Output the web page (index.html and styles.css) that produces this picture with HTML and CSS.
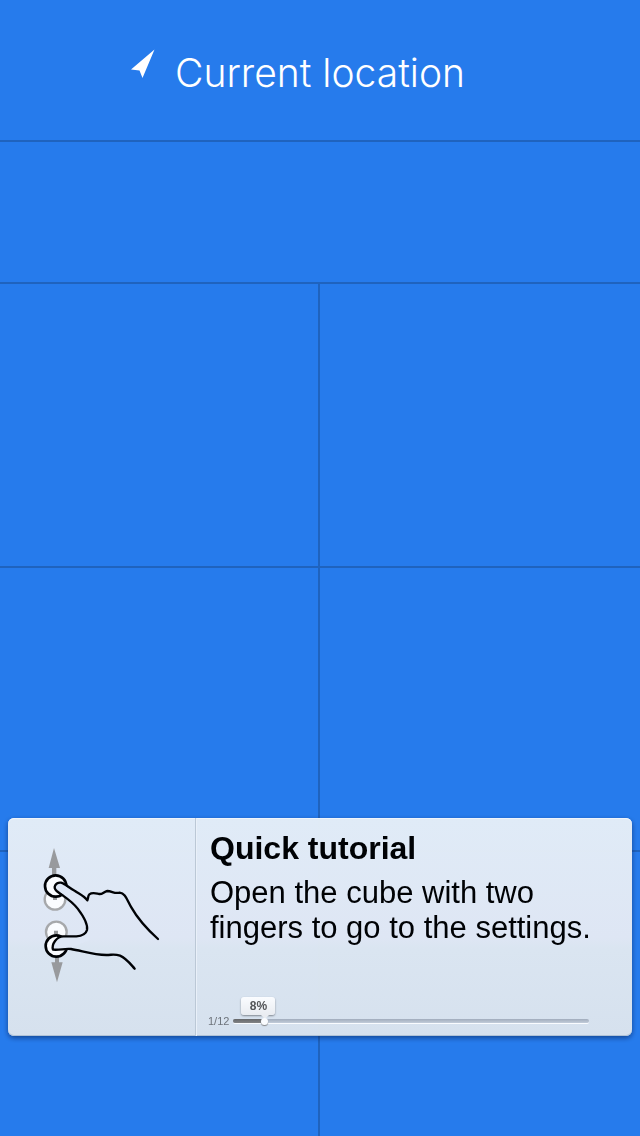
FILE: index.html
```
<!DOCTYPE html>
<html lang="en">
<head>
<meta charset="utf-8">
<meta name="viewport" content="width=device-width, initial-scale=1">
<title>Current location</title>
<link rel="stylesheet" href="styles.css">
</head>
<body>
<main class="board">
  <header class="location">
    <svg class="location-icon" viewBox="0 0 24 30" aria-hidden="true"><path d="M23.500 0.500L11.500 29L8.500 21.500L0 20.500Z"/></svg>
    <h1 class="location-title">Current location</h1>
  </header>
  <div class="row"></div>
  <div class="row row-tall"><div class="cell"></div></div>
  <div class="row row-tall"><div class="cell"></div></div>
  <div class="row row-rest"><div class="cell"></div></div>
</main>
<section class="tutorial" aria-labelledby="tutorial-title">
  <div class="gesture">
    <svg class="gesture-icon" viewBox="0 0 420 450" role="img" aria-label="Spread two fingers">
      <g class="arrows">
        <path d="M72 24L90 84H79V110H66V84H56Z"/>
        <path d="M81 427L64 367H75V340H87V367H98Z"/>
      </g>
      <g class="ghost">
        <circle cx="75" cy="178" r="31"/><circle cx="79" cy="276" r="31"/>
        <path d="M69 170h12v10h-12zM72 272h12v10h-12z"/>
      </g>
      <g class="touch"><circle cx="77" cy="138" r="32"/><circle cx="79" cy="318" r="32"/></g>
      <path class="hand-fill" d="M80 152C71 142 78 126 91 128L172 181L180 300L118 324L72 326C66 318 77 293 95 289L155 285C173 277 175 263 168 241C155 210 126 181 98 163Z"/>
      <path class="hand" d="M384 297C352 268 327 243 304 202C291 180 286 159 269 158C253 162 246 153 232 153C221 155 218 163 208 162C197 160 187 156 178 163C173 167 176 174 172 181C162 168 148 162 135 153C119 145 107 132 93 128C78 126 67 142 80 153C99 168 125 182 143 206C162 231 174 254 171 270C167 285 155 288 139 289L100 289C80 289 64 313 69 329C90 331 102 325 123 327C158 333 190 345 229 345C247 345 252 341 270 347C289 355 303 374 314 386"/>
    </svg>
  </div>
  <div class="content">
    <h2 class="tutorial-title" id="tutorial-title">Quick tutorial</h2>
    <p class="tutorial-text">Open the cube with two fingers to go to the settings.</p>
    <div class="steps">
      <label class="steps-label" for="steps-bar">1/12</label>
      <div class="track">
        <progress class="bar" id="steps-bar" max="12" value="1"></progress>
        <div class="marker"><span class="bubble">8%</span><span class="knob"></span></div>
      </div>
    </div>
  </div>
</section>
</body>
</html>
```
FILE: styles.css
```
* { box-sizing: border-box; }
body {
  margin: 0;
  background: #267bec;
  font-family: "Liberation Sans", Arial, sans-serif;
}
.board {
  display: flex;
  flex-direction: column;
  min-height: 100vh;
}
.location, .row {
  flex: none;
  height: 142px;
  border-bottom: 2px solid #1f63be;
}
.location {
  display: flex;
  align-items: center;
  justify-content: center;
  gap: 20px;
  padding: 6px 44px 0 0;
}
.location-icon {
  width: 24px;
  height: 30px;
  margin-bottom: 18px;
  fill: #fff;
}
.location-title {
  margin: 0;
  color: #fff;
  font: 300 39px/48px Inter, Roboto, sans-serif;
}
.row { display: flex; }
.row.row-tall { height: 284px; }
.row.row-rest {
  flex: 1 0 284px;
  height: auto;
  border-bottom: 0;
}
.cell {
  width: 50%;
  border-right: 2px solid #1f63be;
}
.tutorial {
  position: fixed;
  right: 8px;
  bottom: 100px;
  left: 8px;
  display: flex;
  min-height: 218px;
  border-radius: 6px;
  background: linear-gradient(#e5eef7, #e3e9f4 55%, #dfe8f1 60%, #dbe4ee);
  box-shadow: 0 2px 5px rgba(0, 20, 60, .5), inset 0 1px #f4f8fc, inset 0 -1px #b4c4d6;
  opacity: .98;
}
.gesture {
  flex: none;
  width: 188px;
  padding: 22px;
  border-right: 1px solid #bfcad6;
}
.gesture-icon {
  display: block;
  width: 140px;
  height: 150px;
}
.arrows { fill: #9c9c9c; }
.ghost circle { fill: #fff; stroke: #aaa; stroke-width: 7; }
.ghost path { fill: #999; }
.touch circle { fill: #fff; stroke: #000; stroke-width: 8; }
.hand-fill { fill: #e3eaf5; }
.hand { fill: none; stroke: #000; stroke-width: 7; stroke-linejoin: round; stroke-linecap: round; }
.content {
  flex: 1;
  display: flex;
  flex-direction: column;
  padding: 12px 36px 8px 13px;
  border-left: 1px solid #eef3f9;
}
.tutorial-title {
  margin: 0 0 8px;
  font-size: 32px;
  line-height: 37px;
}
.tutorial-text {
  margin: 0;
  font-size: 31px;
  line-height: 35px;
}
.steps {
  display: flex;
  align-items: center;
  gap: 4px;
  margin: auto 7px 0 -2px;
}
.steps-label {
  color: #707479;
  font-size: 11px;
  line-height: 14px;
}
.track {
  position: relative;
  flex: 1;
  height: 4px;
}
.bar {
  display: block;
  width: 100%;
  height: 4px;
  border: 0;
  appearance: none;
}
.bar::-webkit-progress-bar {
  border-radius: 2px;
  background: linear-gradient(#a5aebb, #c6ceda);
  box-shadow: 0 1px #fff;
}
.bar::-webkit-progress-value {
  border-radius: 2px;
  background: linear-gradient(#686868, #858585);
}
.marker {
  position: absolute;
  bottom: -2px;
  left: 9%;
  width: 0;
}
.knob {
  position: absolute;
  bottom: 0;
  left: -4px;
  width: 7px;
  height: 7px;
  border-radius: 50%;
  background: #fff;
  box-shadow: 0 1px 1px #888;
}
.bubble {
  position: absolute;
  bottom: 10px;
  left: -24px;
  width: 34px;
  border-radius: 3px;
  background: linear-gradient(#fff, #eeeff1);
  box-shadow: 0 1px 2px rgba(0, 0, 0, .4);
  color: #555;
  font-size: 12px;
  font-weight: bold;
  line-height: 18px;
  text-align: center;
}
.bubble::after {
  content: "";
  position: absolute;
  top: 100%;
  right: 6px;
  border: 4px solid transparent;
  border-top-color: #eeeff1;
  border-bottom: 0;
}
```
